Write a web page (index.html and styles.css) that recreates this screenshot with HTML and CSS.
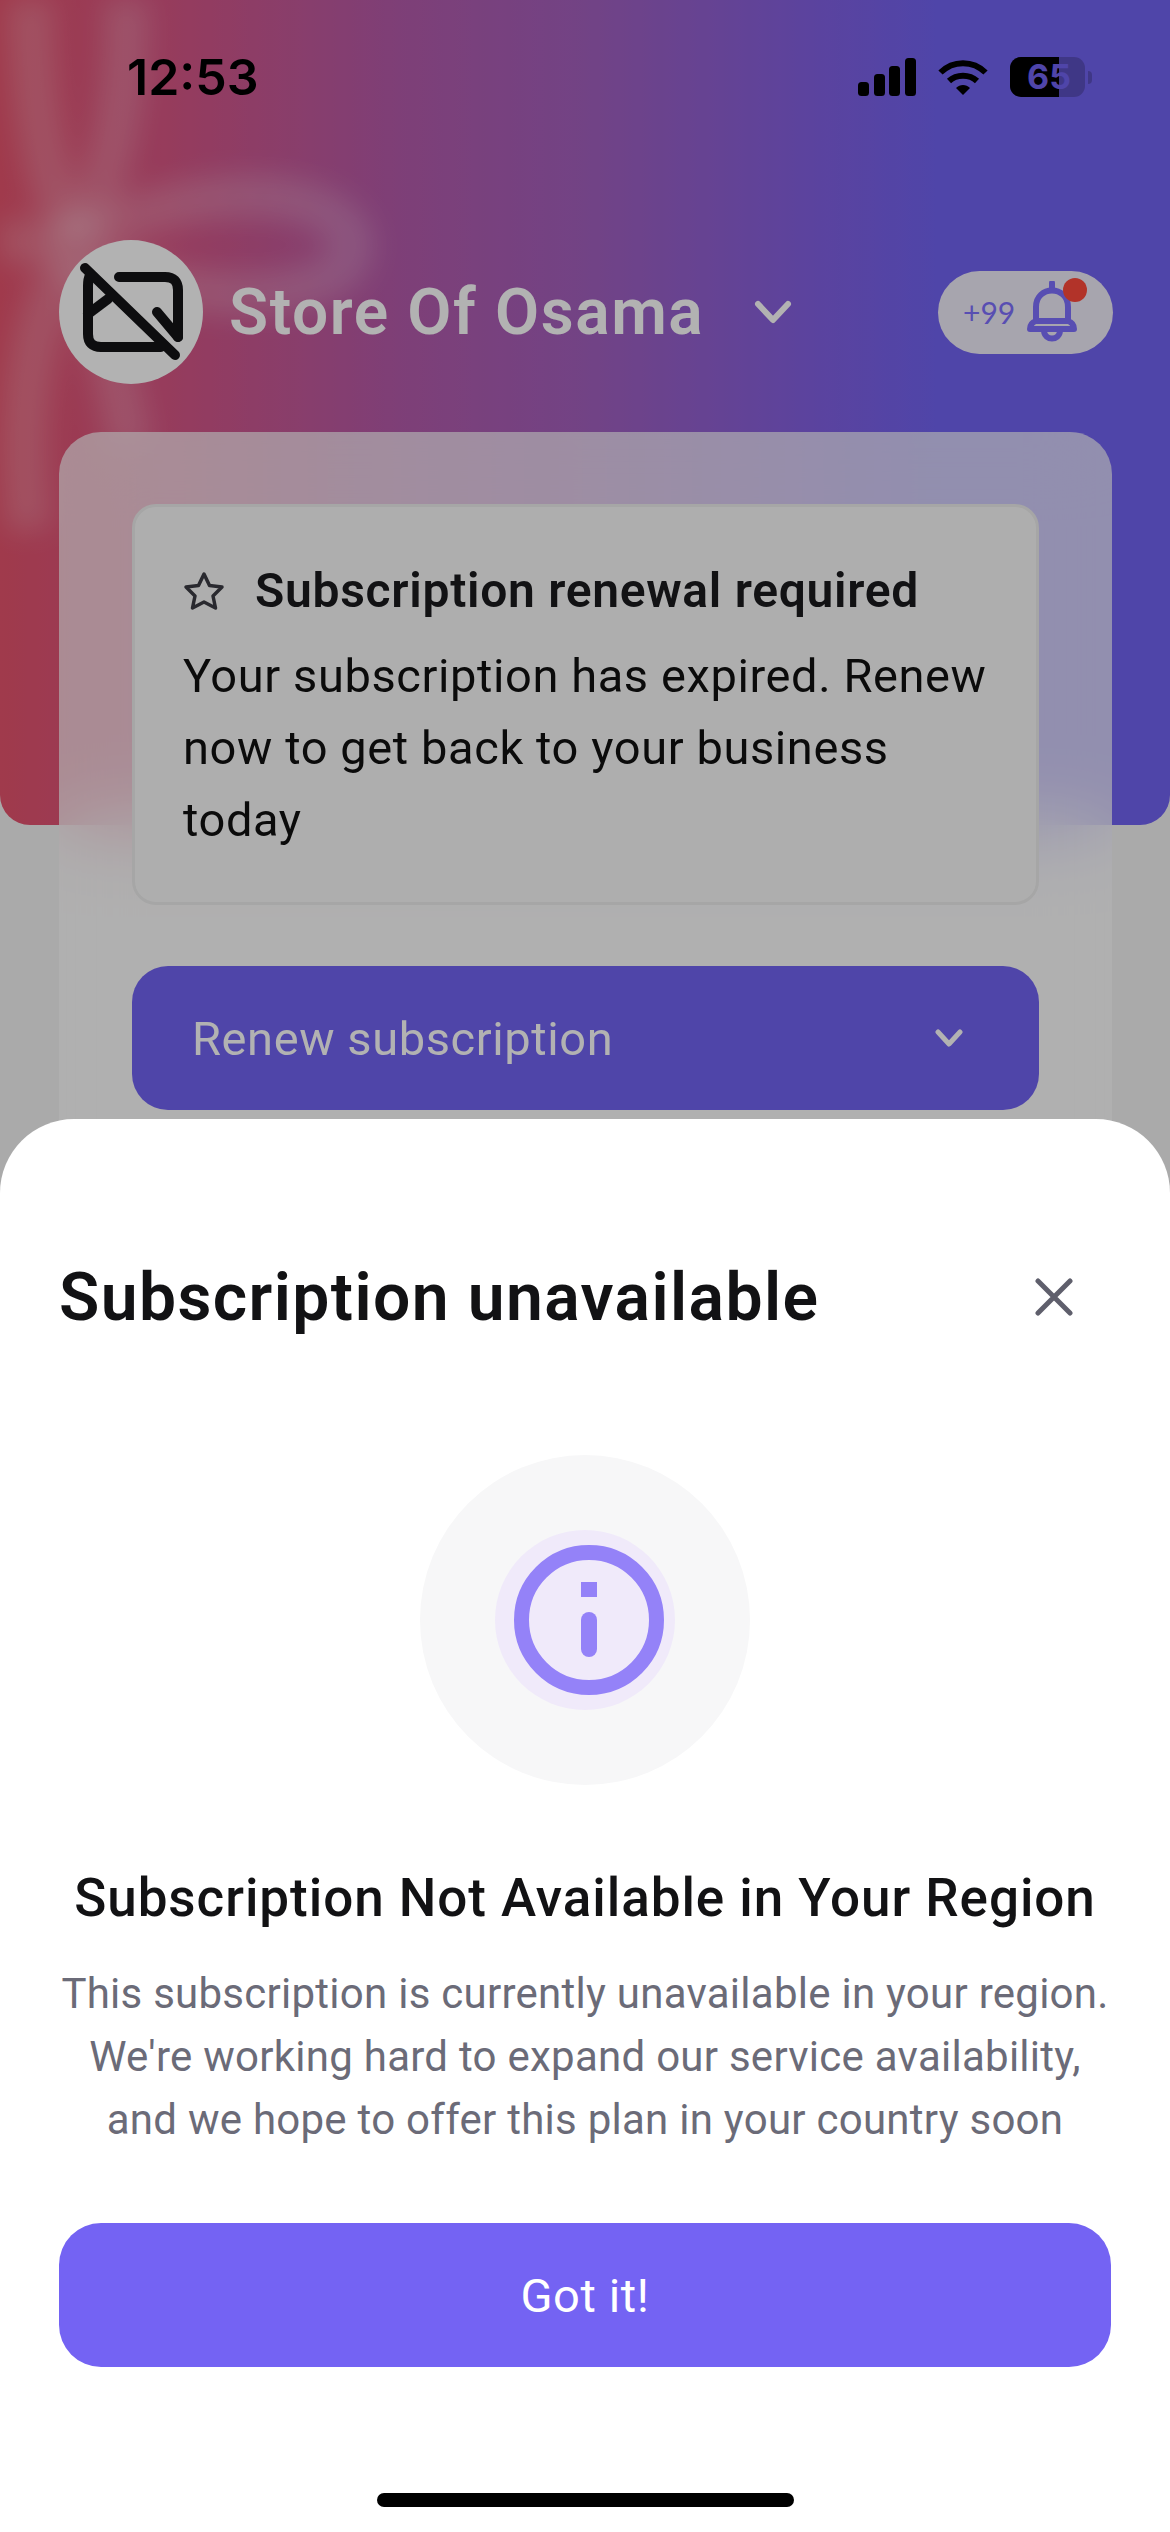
FILE: index.html
```html
<!DOCTYPE html>
<html lang="en">
<head>
    <meta charset="UTF-8">
    <meta name="viewport" content="width=device-width, initial-scale=1.0">
    <title>Subscription unavailable</title>
    <link rel="stylesheet" href="styles.css">
</head>
<body>
    <div class="screen">
        <!-- Gradient header -->
        <div class="hero">
            <svg class="ribbon" viewBox="0 0 420 825" width="420" height="825">
                <g fill="none" stroke="#fff" stroke-opacity="0.2" stroke-width="44">
                    <path d="M30 -20 C30 80 40 180 75 240"/>
                    <path d="M125 -20 C130 60 120 170 75 240"/>
                    <path d="M75 245 C150 195 310 170 350 235 C370 300 200 320 75 250"/>
                    <path d="M75 245 C50 245 20 240 -20 240"/>
                    <path d="M70 260 C30 320 15 420 30 530"/>
                    <path d="M80 260 C100 320 120 380 130 450"/>
                </g>
            </svg>

            <div class="status-bar">
                <span class="time">12:53</span>
                <div class="status-icons">
                    <svg width="58" height="38" viewBox="0 0 58 38" fill="#000">
                        <rect x="0" y="24" width="11" height="14" rx="3.5"/>
                        <rect x="16" y="16" width="11" height="22" rx="3.5"/>
                        <rect x="31" y="8" width="11" height="30" rx="3.5"/>
                        <rect x="47" y="0" width="11" height="38" rx="3.5"/>
                    </svg>
                    <svg width="50" height="38" viewBox="0 0 50 38" fill="none" stroke="#000" stroke-width="6">
                        <path d="M2.5 14.5 C15 2 35 2 47.500 14.500"/>
                        <path d="M11 23 C18.500 16 31.500 16 39 23"/>
                        <path d="M18 30 L25 37 L32 30 C28 26 22 26 18 30 Z" fill="#000" stroke="none"/>
                    </svg>
                    <div class="battery">
                        <div class="battery-body">
                            <div class="battery-fill"></div>
                            <span class="battery-level">65</span>
                        </div>
                        <div class="battery-tip"></div>
                    </div>
                </div>
            </div>

            <div class="store-row">
                <div class="avatar">
                    <svg width="108" height="108" viewBox="0 0 108 108" fill="none" stroke="#141416" stroke-width="10" stroke-linecap="round" stroke-linejoin="round">
                        <path d="M8 10 L98 97"/>
                        <path d="M42 19 H88 Q101 19 101 32 V79"/>
                        <path d="M13 17 Q11 21 11 28 V76 Q11 89 24 89 H84"/>
                        <path d="M11 56 L31 41"/>
                        <path d="M80 54 L101 79"/>
                    </svg>
                </div>
                <span class="store-name">Store Of Osama</span>
                <svg class="store-chevron" width="38" height="24" viewBox="0 0 38 24" fill="none" stroke="#fff" stroke-width="6" stroke-linecap="round" stroke-linejoin="round">
                    <path d="M4 4 L19 20 L34 4"/>
                </svg>
                <div class="notif-pill">
                    <span class="notif-count">+99</span>
                    <div class="notif-bell">
                        <svg width="50" height="62" viewBox="0 0 50 62" fill="none" stroke="#7f70ff" stroke-width="6" stroke-linecap="round" stroke-linejoin="round">
                            <path d="M25 2 V9"/>
                            <path d="M9 40 V26 C9 4 41 4 41 26 V40"/>
                            <path d="M3 48 Q3 42 9 40 H41 Q47 42 47 48 Z"/>
                            <path d="M17 50 C18 60 32 60 33 50"/>
                        </svg>
                        <span class="notif-dot"></span>
                    </div>
                </div>
            </div>
        </div>

        <!-- Card behind the sheet -->
        <div class="card">
            <div class="notice">
                <div class="notice-head">
                    <svg width="42" height="40" viewBox="0 0 42 40" fill="none" stroke="#3c3c44" stroke-width="3.500" stroke-linejoin="round">
                        <path d="M21 3 L26.500 14.500 L39 16 L30 25 L32.500 37 L21 31 L9.500 37 L12 25 L3 16 L15.500 14.500 Z"/>
                    </svg>
                    <span>Subscription renewal required</span>
                </div>
                <p class="notice-text">Your subscription has expired. Renew<br>now to get back to your business<br>today</p>
            </div>
            <div class="renew">
                <span>Renew subscription</span>
                <svg width="28" height="18" viewBox="0 0 28 18" fill="none" stroke="#fff" stroke-width="5" stroke-linecap="round" stroke-linejoin="round">
                    <path d="M3 3 L14 15 L25 3"/>
                </svg>
            </div>
        </div>

        <div class="overlay"></div>

        <!-- Bottom sheet -->
        <div class="sheet">
            <div class="sheet-head">
                <h2>Subscription unavailable</h2>
                <svg width="38" height="38" viewBox="0 0 38 38" fill="none" stroke="#5f5f6c" stroke-width="5" stroke-linecap="round">
                    <path d="M3 3 L35 35 M35 3 L3 35"/>
                </svg>
            </div>
            <div class="info-circle">
                <div class="info-inner">
                    <svg width="150" height="150" viewBox="0 0 150 150" fill="none">
                        <circle cx="75" cy="75" r="67.500" stroke="#9482f8" stroke-width="15"/>
                        <rect x="67" y="37" width="16" height="15" fill="#9482f8"/>
                        <rect x="67" y="67" width="16" height="45" rx="8" fill="#9482f8"/>
                    </svg>
                </div>
            </div>
            <h3>Subscription Not Available in Your Region</h3>
            <p class="sheet-text">This subscription is currently unavailable in your region.<br>We're working hard to expand our service availability,<br>and we hope to offer this plan in your country soon</p>
            <div class="got-it">Got it!</div>
            <div class="home-bar"></div>
        </div>
    </div>
</body>
</html>
```

FILE: styles.css
```css
* {
    box-sizing: border-box;
}
body {
    margin: 0;
    font-family: Roboto, "Noto Sans", sans-serif;
    background-color: #f4f4f4;
    color: #111;
}
h2, h3, p {
    margin: 0;
}
.screen {
    position: relative;
    width: 1170px;
    height: 2532px;
    overflow: hidden;
}

/* header */
.hero {
    position: relative;
    height: 825px;
    padding: 0 57px 0 59px;
    background: linear-gradient(90deg, #e5536d 0%, #d85684 14%, #b55bab 34%, #a460bf 50%, #8261e4 70%, #7263f2 80%);
    border-radius: 0 0 30px 30px;
    overflow: hidden;
}
.ribbon {
    position: absolute;
    left: 0;
    top: 0;
    filter: blur(14px);
}
.status-bar {
    position: relative;
    height: 240px;
    display: flex;
    justify-content: space-between;
    align-items: flex-start;
    padding: 57px 21px 0 68px;
}
.time {
    font-family: Inter, sans-serif;
    font-size: 50px;
    font-weight: 600;
    line-height: 40px;
    color: #000;
}
.status-icons {
    display: flex;
    align-items: center;
    gap: 22px;
}
.battery {
    display: flex;
    align-items: center;
    gap: 3px;
}
.battery-body {
    position: relative;
    width: 75px;
    height: 40px;
    background: rgba(0, 0, 0, 0.2);
    border-radius: 11px;
    overflow: hidden;
}
.battery-fill {
    width: 49px;
    height: 40px;
    background: #000;
}
.battery-level {
    position: absolute;
    left: 3px;
    right: 0;
    top: 0;
    font-family: Inter, sans-serif;
    font-size: 34px;
    font-weight: 700;
    line-height: 40px;
    text-align: center;
    color: #7263f2;
}
.battery-tip {
    width: 4px;
    height: 13px;
    background: rgba(0, 0, 0, 0.2);
    border-radius: 0 4px 4px 0;
}
.store-row {
    position: relative;
    display: flex;
    align-items: center;
}
.avatar {
    width: 144px;
    height: 144px;
    flex-shrink: 0;
    display: flex;
    align-items: center;
    justify-content: center;
    background: #fff;
    border-radius: 50%;
}
.store-name {
    margin-left: 26px;
    font-size: 64px;
    font-weight: 600;
    letter-spacing: 1.6px;
    color: #fff;
}
.store-chevron {
    margin-left: 50px;
}
.notif-pill {
    position: relative;
    margin-left: auto;
    width: 175px;
    height: 83px;
    display: flex;
    align-items: center;
    padding-left: 25px;
    gap: 12px;
    background: #f0ecfa;
    border-radius: 42px;
}
.notif-count {
    font-family: Lato, sans-serif;
    font-size: 30px;
    color: #7f70ff;
}
.notif-bell {
    position: relative;
    width: 50px;
    height: 62px;
}
.notif-dot {
    position: absolute;
    left: 36px;
    top: -3px;
    width: 24px;
    height: 24px;
    background: #ff4a3c;
    border-radius: 50%;
}

/* card under the sheet */
.card {
    position: absolute;
    left: 59px;
    top: 432px;
    width: 1053px;
    height: 800px;
    padding: 72px 73px 0;
    background: rgba(255, 255, 255, 0.68);
    backdrop-filter: blur(40px);
    border-radius: 42px 42px 0 0;
}
.notice {
    height: 401px;
    padding: 55px 48px 0;
    background: #fafafa;
    border: 3px solid #eeeeee;
    border-radius: 24px;
}
.notice-head {
    display: flex;
    align-items: center;
    gap: 30px;
    font-size: 48px;
    font-weight: 600;
    letter-spacing: 0.7px;
    color: #1a1a1e;
    line-height: 58px;
}
.notice-text {
    margin-top: 20px;
    font-size: 47px;
    letter-spacing: 0.6px;
    line-height: 72px;
    color: #111;
    white-space: nowrap;
}
.renew {
    margin-top: 61px;
    height: 144px;
    display: flex;
    align-items: center;
    justify-content: space-between;
    padding: 0 76px 0 60px;
    background: #7263f2;
    border-radius: 36px;
    font-size: 47px;
    letter-spacing: 0.6px;
    color: #fff;
}
.overlay {
    position: absolute;
    inset: 0;
    background: rgba(0, 0, 0, 0.3);
}

/* bottom sheet */
.sheet {
    position: absolute;
    left: 0;
    right: 0;
    top: 1119px;
    bottom: 0;
    padding: 0 59px;
    background: #fff;
    border-radius: 74px 74px 0 0;
    display: flex;
    flex-direction: column;
    align-items: center;
}
.sheet-head {
    width: 100%;
    height: 240px;
    padding: 116px 38px 0 0;
    display: flex;
    align-items: center;
    justify-content: space-between;
}
.sheet-head h2 {
    font-size: 66px;
    font-weight: 600;
    letter-spacing: 1.4px;
    color: #121214;
}
.info-circle {
    margin-top: 96px;
    width: 330px;
    height: 330px;
    display: flex;
    align-items: center;
    justify-content: center;
    background: #f7f7f8;
    border-radius: 50%;
}
.info-inner {
    width: 180px;
    height: 180px;
    display: flex;
    align-items: center;
    justify-content: center;
    background: #f0eafa;
    border-radius: 50%;
}
.info-inner svg {
    margin-left: 8px;
}
h3 {
    margin-top: 78px;
    font-size: 53px;
    font-weight: 500;
    letter-spacing: 0.95px;
    line-height: 70px;
    color: #121214;
    white-space: nowrap;
}
.sheet-text {
    margin-top: 29px;
    font-size: 42px;
    letter-spacing: 0.26px;
    line-height: 63px;
    text-align: center;
    color: #6b6b78;
    white-space: nowrap;
}
.got-it {
    margin-top: 72px;
    width: 100%;
    height: 144px;
    display: flex;
    align-items: center;
    justify-content: center;
    background: #7463f3;
    border-radius: 42px;
    font-size: 47px;
    letter-spacing: 0.6px;
    color: #fff;
}
.home-bar {
    position: absolute;
    left: 377px;
    bottom: 25px;
    width: 417px;
    height: 14px;
    background: #000;
    border-radius: 7px;
}
```
